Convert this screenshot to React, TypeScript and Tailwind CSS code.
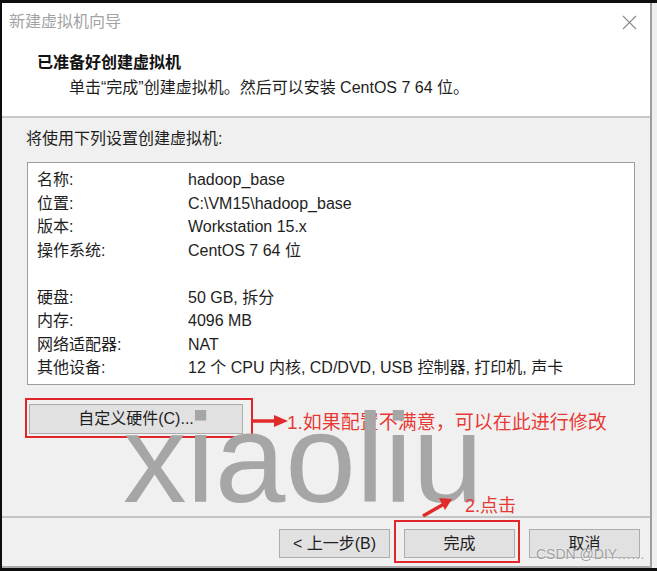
export default function App() {
  const rows: [string, string][] = [
    ["名称:", "hadoop_base"],
    ["位置:", "C:\\VM15\\hadoop_base"],
    ["版本:", "Workstation 15.x"],
    ["操作系统:", "CentOS 7 64 位"],
    ["", ""],
    ["硬盘:", "50 GB, 拆分"],
    ["内存:", "4096 MB"],
    ["网络适配器:", "NAT"],
    ["其他设备:", "12 个 CPU 内核, CD/DVD, USB 控制器, 打印机, 声卡"],
  ];
  return (
    <div className="w-[657px] h-[571px] bg-[#0d0d0d] pt-[3px] pb-[3px] flex flex-col relative overflow-hidden font-['Liberation_Sans','Noto_Sans_CJK_SC',sans-serif] text-[#1e1e1e]">
      <div className="flex flex-1 min-h-0">
        <div className="w-[2px]" />
        <div className="flex-1 flex flex-col border-r-2 border-r-[#9e9e9e] border-b-2 border-b-[#a9a9a9] bg-[#f0f0f0]">
          {/* header */}
          <div className="h-[113px] bg-white flex flex-col border-b-2 border-b-[#c9c9c9] box-content">
            <div className="h-[38px] flex items-center justify-between pl-[7px] pr-[13px]">
              <span className="text-[16px] leading-[20px] text-[#a3a3a3]">新建虚拟机向导</span>
              <svg width="15" height="15" viewBox="0 0 15 15" className="block">
                <path d="M1 1 L14 14 M14 1 L1 14" stroke="#8a8a8a" strokeWidth="1.1" fill="none" />
              </svg>
            </div>
            <div className="mt-[11px] pl-[35px] text-[16px] leading-[22px] font-bold text-[#111]">已准备好创建虚拟机</div>
            <div className="mt-[3px] pl-[67px] text-[16px] leading-[22px]">单击“完成”创建虚拟机。然后可以安装 CentOS 7 64 位。</div>
          </div>
          {/* body */}
          <div className="flex-1 flex flex-col">
            <div className="mt-[11px] pl-[24px] text-[16px] leading-[20px]">将使用下列设置创建虚拟机:</div>
            <div className="mt-[13px] ml-[25px] w-[608px] h-[223px] bg-white border border-[#9d9d9d] pt-[5px] pl-[9px]">
              {rows.map(([k, v], i) => (
                <div key={i} className="grid grid-cols-[151px_1fr] text-[16px] leading-[23.5px] h-[23.5px]">
                  <span>{k}</span>
                  <span>{v}</span>
                </div>
              ))}
            </div>
            <div className="mt-[19px] ml-[27px] w-[214px] h-[30px] bg-[#e1e1e1] border border-[#adadad] flex items-center justify-center text-[16px]">
              自定义硬件(C)...
            </div>
          </div>
          {/* footer */}
          <div className="h-[50px] border-t-2 border-t-[#c4c4c4] flex justify-end items-start gap-[14px] pr-[10px] pt-[11px]">
            <div className="w-[111px] h-[29px] bg-[#e1e1e1] border border-[#adadad] flex items-center justify-center text-[16px]">&lt; 上一步(B)</div>
            <div className="w-[111px] h-[29px] bg-[#e1e1e1] border border-[#adadad] flex items-center justify-center text-[16px]">完成</div>
            <div className="w-[111px] h-[29px] bg-[#e1e1e1] border border-[#adadad] flex items-center justify-center text-[16px]">取消</div>
          </div>
        </div>
        <div className="w-[5px] bg-[#efefef]" />
      </div>

      {/* annotations */}
      <div className="absolute left-[25px] top-[398px] w-[228px] h-[40px] border-2 border-[#e0262b]" />
      <svg className="absolute left-[252px] top-[412px]" width="38" height="18" viewBox="0 0 38 18">
        <line x1="1" y1="9" x2="24" y2="9" stroke="#e32a2a" strokeWidth="3.5" />
        <polygon points="22,3 36,9 22,15" fill="#e32a2a" />
      </svg>
      <div className="absolute left-[287px] top-[411px] text-[19px] leading-[24px] text-[#e53935] [text-shadow:0_0_1px_#fff]">1.如果配置不满意，可以在此进行修改</div>
      <div className="absolute left-[123px] top-[395px] text-[127px] leading-none text-[#a6a6a6] font-['Liberation_Sans',sans-serif]">xiaoliu</div>
      <div className="absolute left-[465px] top-[494px] text-[18px] leading-[24px] text-[#e53935]">2.点击</div>
      <svg className="absolute left-[420px] top-[495px]" width="34" height="24" viewBox="0 0 34 24">
        <line x1="3" y1="21" x2="24" y2="9" stroke="#e32a2a" strokeWidth="3.5" />
        <polygon points="19,3 32,4 25,15" fill="#e32a2a" />
      </svg>
      <div className="absolute left-[394px] top-[520px] w-[126px] h-[43px] border-2 border-[#e0262b]" />
      <div className="absolute left-[536px] top-[545px] text-[14px] leading-[18px] text-[#a0a0a0] [text-shadow:0_0_2px_#fff]">CSDN @DIY……</div>
    </div>
  );
}
